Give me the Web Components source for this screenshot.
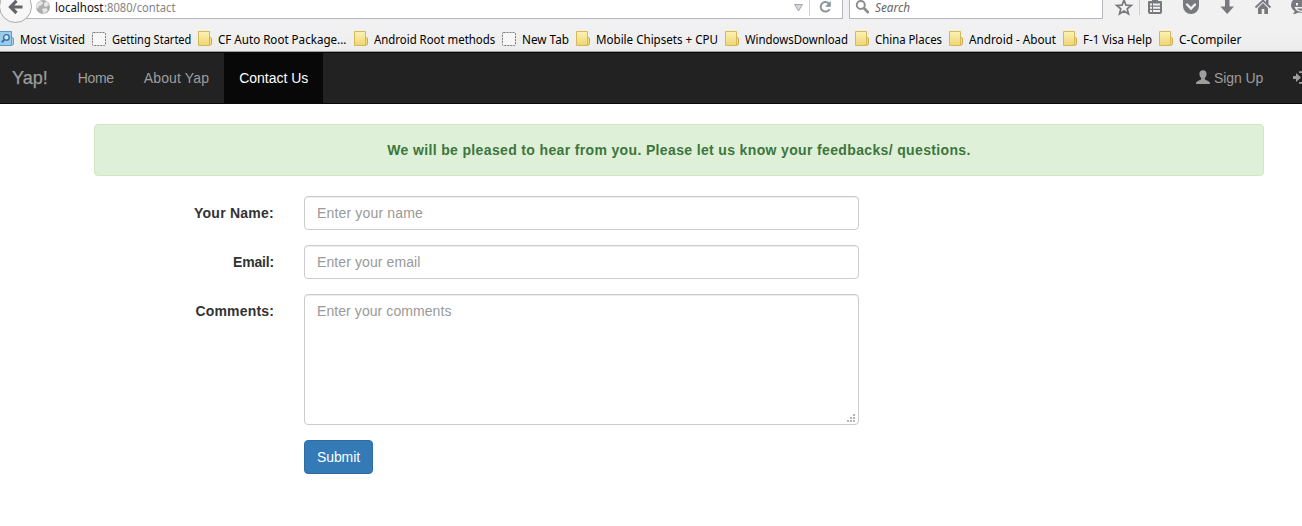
<!DOCTYPE html>
<html lang="en">
<head>
<meta charset="utf-8">
<title>Yap! - Contact Us</title>
<style>
body { margin: 0; background: #fff; font: 14px/20px "Liberation Sans", Arial, sans-serif; color: #333; overflow: hidden; }
</style>
</head>
<body>
<browser-toolbar></browser-toolbar>
<bookmark-bar>
  <bookmark-item kind="smart" w="65">Most Visited</bookmark-item>
  <bookmark-item kind="blank" w="79.4">Getting Started</bookmark-item>
  <bookmark-item kind="folder" w="128.400">CF Auto Root Package...</bookmark-item>
  <bookmark-item kind="folder" w="121.200">Android Root methods</bookmark-item>
  <bookmark-item kind="blank" w="47">New Tab</bookmark-item>
  <bookmark-item kind="folder" w="122">Mobile Chipsets + CPU</bookmark-item>
  <bookmark-item kind="folder" w="103">WindowsDownload</bookmark-item>
  <bookmark-item kind="folder" w="67">China Places</bookmark-item>
  <bookmark-item kind="folder" w="87">Android - About</bookmark-item>
  <bookmark-item kind="folder" w="69">F-1 Visa Help</bookmark-item>
  <bookmark-item kind="folder" w="62.500">C-Compiler</bookmark-item>
</bookmark-bar>
<site-nav>
  <nav-link w="36">Home</nav-link>
  <nav-link w="65.500">About Yap</nav-link>
  <nav-link w="69" active>Contact Us</nav-link>
</site-nav>
<contact-page>
  <alert-box>We will be pleased to hear from you. Please let us know your feedbacks/ questions.</alert-box>
  <form-row label="Your Name:" lw="80" w="106">Enter your name</form-row>
  <form-row label="Email:" lw="41" w="103.500">Enter your email</form-row>
  <form-row label="Comments:" lw="78.500" w="134.500" area>Enter your comments</form-row>
  <submit-button>Submit</submit-button>
</contact-page>
<script>
function define(name, html, setup) {
  const tpl = document.createElement('template');
  tpl.innerHTML = html;
  customElements.define(name, class extends HTMLElement {
    constructor() {
      super();
      this.attachShadow({ mode: 'open' }).append(tpl.content.cloneNode(true));
    }
    connectedCallback() { if (setup) setup(this, this.shadowRoot); }
  });
}

function naturalWidth(node) {
  const range = document.createRange();
  range.selectNodeContents(node);
  return range.getBoundingClientRect().width;
}

/* Spreads letter spacing so that the text fills the given width. */
function track(host, width, styled = host) {
  styled.style.letterSpacing = (width - naturalWidth(host)) / host.textContent.length + 'px';
}

/* Condenses a one-line box horizontally to the given width. */
function condense(el, width) {
  const natural = naturalWidth(el);
  el.style.cssText += `display:block;width:${width}px;transform-origin:0 0;white-space:pre`;
  const inner = document.createElement('span');
  inner.textContent = el.textContent;
  inner.style.cssText = `display:block;width:${natural}px;transform-origin:0 0;transform:scaleX(${width / natural})`;
  el.replaceChildren(inner);
}

define('browser-toolbar', `
<style>
:host { display: flex; height: 28px; background: #f1f1f1; font: 12px/15px "Noto Sans", "Open Sans", sans-serif; overflow: hidden; }
svg { display: block; flex: none; }
.back { width: 33px; height: 24px; }
.url, .search { box-sizing: border-box; flex: none; height: 19px; background: #fff; border: solid #b3b7bd; border-width: 0 1px 1px 0; display: flex; }
.url { width: 810px; }
.search { width: 254px; margin-left: 6px; border-left-width: 1px; }
.addr { white-space: pre; margin-left: 4px; color: #858585; flex: 1; display: flex; }
.host { color: #111; }
.search > span { font-style: italic; color: #666; margin-left: 6px; }
</style>
<svg class="back" viewBox="0 0 33 24"><rect x="15" width="18" height="18" fill="#fff"/><path d="M15 18.500H33" stroke="#b3b7bd"/><circle cx="15.500" cy="6.500" r="16" fill="#f7f7f7" stroke="#aaa"/><path d="M22.500 7H11M16.500 .8L10.500 7l6 6" fill="none" stroke="#636568" stroke-width="3.200"/></svg>
<div class="url">
  <svg width="18" height="18" viewBox="33 0 18 18"><circle cx="43" cy="7" r="7" fill="#adadad"/><path d="M37 4l3-3 3 1-1 3-3 1-1 3-2-2zM44 3l3-2 2 4-3 2-2-1zM42 9l4-1 2 2-4 4-1-2z" fill="#e5e5e5"/></svg>
  <div class="addr"><span class="host">localhost</span><span class="rest">:8080/contact</span></div>
  <svg width="50" height="18" viewBox="792 0 50 18"><path d="M794.500 4.500h8l-4 6.500z" fill="#d4d7db" stroke="#a4a9af"/><path d="M809.500 0v16" stroke="#d0d3d6"/><path d="M829 3.500A4.800 4.800 0 1 0 829.600 9.200" fill="none" stroke="#8c949c" stroke-width="2"/><path d="M830.800 1v5.800h-5.800z" fill="#8c949c"/></svg>
</div>
<div class="search">
  <svg width="19" height="18" viewBox="850 0 19 18"><circle cx="860.800" cy="5" r="4" fill="none" stroke="#8e8e8e" stroke-width="2"/><path d="M863.800 8l5 5" stroke="#8e8e8e" stroke-width="2.800"/></svg>
  <span>Search</span>
</div>
<svg width="199" height="24" viewBox="1103 0 199 24" fill="#77797c">
  <path d="M1124 .2l2 4.900 5.300.3-4.100 3.400 1.300 5.100-4.500-2.800-4.500 2.800 1.300-5.100-4.100-3.400 5.300-.3z" fill="none" stroke="#77797c" stroke-width="1.700"/>
  <path d="M1139 0h1v15h-1z" fill="#cfcfcf"/>
  <path d="M1149 1h12q1 0 1 1v10q0 2-2 2h-10q-2 0-2-2V2q0-1 1-1z"/><path d="M1152 0h6v2h-6z"/><path d="M1150 3.500h2v2h-2zm3 0h7v2h-7zM1150 6.800h2v2h-2zm3 0h7v2h-7zM1150 10.100h2v2h-2zm3 0h7v2h-7z" fill="#f1f1f1"/>
  <path d="M1183 0h16v6a8 8 0 0 1-16 0z"/><path d="M1187 4.500l4 4 4-4" stroke="#f1f1f1" stroke-width="2.400" fill="none" stroke-linecap="round"/>
  <path d="M1225 0h4.500v6.500h4.500l-6.800 7.500-6.800-7.500h4.600z"/>
  <path d="M1255.500 7.500l7.500-7 7.500 7" stroke="#77797c" stroke-width="1.800" fill="none"/><path d="M1266 0h2.500v4h-2.500zM1258 8l5-5 5 5v6h-3.700V9h-2.600v5H1258z"/>
  <path d="M1293 0h9v12.500q-2 .5-4 0-2 1.600-5 1.500 1.600-1.400 1.600-3-3.600-2.400-3.600-6 0-3 2-5z"/><path d="M1296 3h2v2.500h-2zM1294.500 7h7.500v1.500h-5q1 2 5 2v1.400q-6 0-7.500-4.900z" fill="#f1f1f1"/>
</svg>`, (el, r) => {
  condense(r.querySelector('.host'), 48.500);
  condense(r.querySelector('.rest'), 71.500);
  condense(r.querySelector('.search > span'), 35);
});

define('bookmark-bar', `
<style>
:host { display: flex; gap: 7px; height: 24px; box-sizing: border-box; padding-top: 3px; background: linear-gradient(#f1f1f1, #ededed); border-bottom: 1px solid #9c9c9c; overflow: hidden; }
</style><slot></slot>`);

define('bookmark-item', `
<style>
:host { display: flex; flex: none; gap: 6px; font: 12px/18px "Noto Sans", "Open Sans", sans-serif; color: #000; white-space: pre; }
svg { display: block; flex: none; }
</style><svg width="14" height="16" viewBox="0 0 14 16"></svg><span class="text"></span>`, (el, r) => {
  const art = {
    folder: '<linearGradient id="g" x2="0" y2="1"><stop stop-color="#fdf3b5"/><stop offset="1" stop-color="#eed471"/></linearGradient><path d="M10 6.500h2.200q1.300 0 1.300 1.200v5q0 1.300-1.500 1.300H10z" fill="#f3dc82" stroke="#c9ab4b"/><path d="M.5.5h11v14H.5z" fill="url(#g)" stroke="#d5b958"/>',
    smart: '<path d="M10 6.500h2.200q1.300 0 1.300 1.200v5q0 1.300-1.500 1.300H10z" fill="#a9d3ee" stroke="#5d9fc8"/><path d="M-.5.5h12v14h-12z" fill="#9bcceb" stroke="#5b9dc7"/><circle cx="6.400" cy="6.400" r="2.800" fill="#cce7f7" stroke="#3a72a0" stroke-width="1.400"/><path d="M4.500 8.500L1.700 11.400" stroke="#3a72a0" stroke-width="2"/>',
    blank: '<rect x=".5" y="1.500" width="13" height="13" rx="1" fill="#f7f7f7" stroke="#777" stroke-dasharray="2 1"/>'
  };
  r.querySelector('svg').innerHTML = art[el.getAttribute('kind')];
  const text = r.querySelector('.text');
  text.textContent = el.textContent;
  condense(text, +el.getAttribute('w'));
});

define('site-nav', `
<style>
:host { display: flex; box-sizing: border-box; height: 52px; background: #222; border: solid #080808; border-width: 1px 0; color: #9d9d9d; overflow: hidden; }
.brand { font-size: 18px; padding: 15px 15px 15px 12px; -webkit-text-stroke: .25px; }
.right { display: flex; margin-left: auto; margin-right: -6px; padding-top: 15px; gap: 30px; white-space: pre; }
.right div { display: flex; gap: 4px; }
.signup { width: 49px; letter-spacing: -.1px; }
svg { display: block; }
</style>
<div class="brand">Yap!</div><slot></slot>
<div class="right">
  <div><svg width="14" height="20" viewBox="0 0 14 20" fill="#9d9d9d"><path d="M7 2.200c2.400 0 3.600 1.600 3.600 3.800 0 1.800-.8 3.200-1.800 4.100v1.100c.6.9 5.100 1.800 5.100 3.600V16H.1v-1.200c0-1.800 4.500-2.700 5.100-3.600v-1.100C4.200 9.200 3.400 7.800 3.400 6 3.400 3.800 4.600 2.200 7 2.200z"/></svg><span class="signup">Sign Up</span></div>
  <svg width="15" height="20" viewBox="0 0 15 20"><path d="M0 8h3V5l5 4.500-5 4.500v-3H0z" fill="#9d9d9d"/><path d="M6 4.200h6.500v10.600H6" fill="none" stroke="#9d9d9d" stroke-width="1.800"/></svg>
</div>`);

define('nav-link', `
<style>
:host { display: block; box-sizing: content-box; padding: 15px; white-space: nowrap; }
:host([active]) { background: #080808; color: #fff; }
</style><slot></slot>`, el => {
  track(el, +el.getAttribute('w'));
  el.style.width = el.getAttribute('w') + 'px';
});

define('contact-page', `
<style>
:host { display: flex; flex-direction: column; align-items: flex-start; gap: 15px; width: 1170px; margin: 20px 0 0 94px; }
</style><slot></slot>`);

define('alert-box', `
<style>
:host { display: block; box-sizing: border-box; width: 100%; height: 52px; padding: 15px; margin-bottom: 5px; background: #dff0d8; border: 1px solid #d0e6c4; border-radius: 4px; color: #3c763d; font-weight: bold; text-align: center; white-space: nowrap; }
</style><slot></slot>`, el => track(el, 583.500));

define('form-row', `
<style>
:host { display: grid; grid-template-columns: 180px 555px; column-gap: 30px; }
label { text-align: right; font-weight: bold; padding-top: 7px; }
.field { position: relative; box-sizing: border-box; height: 34px; padding: 6px 12px; border: 1px solid #ccc; border-radius: 4px; background: #fff; color: #999; box-shadow: inset 0 1px 1px rgba(0,0,0,.075); }
:host([area]) .field { height: 131px; }
svg { display: none; position: absolute; right: 3px; bottom: 2px; }
:host([area]) svg { display: block; }
</style>
<label></label>
<div class="field"><slot></slot><svg width="8" height="8" fill="#b4b4b4"><path d="M6 0h2v2H6zM3 3h2v2H3zM6 3h2v2H6zM0 6h2v2H0zM3 6h2v2H3zM6 6h2v2H6z"/></svg></div>`, (el, r) => {
  const label = r.querySelector('label');
  label.textContent = el.getAttribute('label');
  track(label, +el.getAttribute('lw'));
  track(el, +el.getAttribute('w'), r.querySelector('slot'));
});

define('submit-button', `
<style>
:host { display: block; box-sizing: border-box; width: 69px; height: 34px; padding: 6px 12px; margin-left: 210px; background: #337ab7; border: 1px solid #2e6da4; border-radius: 4px; color: #fff; }
</style><slot></slot>`, el => track(el, 43));
</script>
</body>
</html>
